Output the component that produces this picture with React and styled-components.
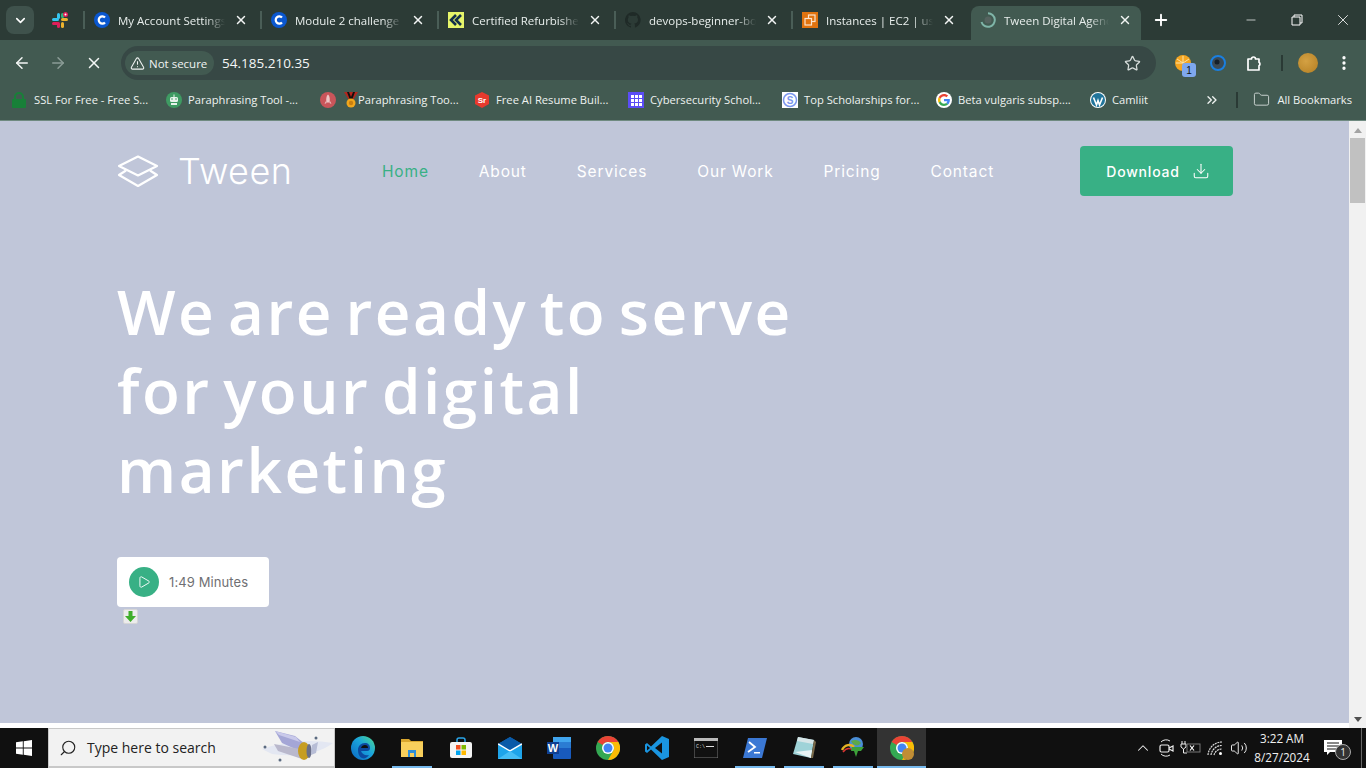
import React from "react";
import styled, { createGlobalStyle } from "styled-components";
import { ArrowLeft, ArrowRight, X, TriangleAlert, Star, MoreVertical, ChevronDown, Plus, Folder, ChevronsRight, ChevronUp, Search, Minus, Volume2, Download as DownloadIcon, Play } from "lucide-react";

const Global = createGlobalStyle`
  html, body { margin: 0; padding: 0; height: 100%; overflow: hidden; }
  body { font-family: "Open Sans", "Noto Sans", sans-serif; }
  * { box-sizing: border-box; }
`;
const Screen = styled.div`width:1366px;height:768px;display:flex;flex-direction:column;overflow:hidden;background:#fff;`;
const TabStrip = styled.div`height:40px;flex:none;background:#2c3b36;display:flex;align-items:flex-end;`;
const TabSearch = styled.div`width:28px;height:28px;margin:0 0 6px 6px;border-radius:8px;background:#3f524c;display:flex;align-items:center;justify-content:center;color:#fff;flex:none;`;
const PinnedTab = styled.div`width:49px;height:34px;flex:none;display:flex;align-items:center;padding:0 0 6px 18px;`;
const Tab = styled.div`
  width:${p=>p.$active?"170px":"177px"};height:34px;flex:none;display:flex;align-items:center;position:relative;
  padding:${p=>p.$active?"0 8px 6px 9px":"0 11px 6px 11px"};gap:8px;
  margin-left:${p=>p.$active?"3px":"0"};
  background:${p=>p.$active?"#425a51":"transparent"};
  border-radius:8px 8px 0 0;
  &::before{content:"";display:${p=>p.$active?"none":"block"};position:absolute;left:0;top:5px;height:18px;width:2px;background:#4a5e57;}
`;
const TabTitle = styled.div`
  flex:1;min-width:0;overflow:hidden;white-space:nowrap;font-size:11.5px;color:#e8eeec;
  -webkit-mask-image:linear-gradient(to right,#000 82%,transparent 100%);mask-image:linear-gradient(to right,#000 82%,transparent 100%);
`;
const TabClose = styled.div`width:16px;height:16px;flex:none;display:flex;align-items:center;justify-content:center;color:#f2f5f4;`;
const NewTab = styled.div`width:24px;height:24px;margin:0 0 8px 8px;color:#fff;display:flex;align-items:center;justify-content:center;flex:none;`;
const WindowBtns = styled.div`margin-left:auto;display:flex;height:40px;align-self:flex-start;`;
const WinBtn = styled.div`width:46px;height:40px;display:flex;align-items:center;justify-content:center;color:#fff;`;

const Toolbar = styled.div`height:40px;flex:none;background:#425a51;display:flex;align-items:flex-end;`;
const NavIcons = styled.div`width:121px;height:34px;flex:none;display:flex;align-items:center;padding-left:12px;gap:16px;`;
const NavIcon = styled.div`width:20px;height:20px;display:flex;align-items:center;justify-content:center;color:${p=>p.$dim?"#8b9c96":"#f3f6f5"};`;
const Omnibox = styled.div`width:1035px;height:34px;flex:none;background:#374845;border-radius:17px;display:flex;align-items:center;padding:0 15px 0 4px;`;
const Chip = styled.div`height:24px;width:89px;flex:none;border-radius:12px;background:#425a51;display:flex;align-items:center;gap:4px;padding-left:5px;color:#f0f3f2;font-size:11.5px;`;
const Url = styled.div`margin-left:8px;font-size:13.5px;color:#f4f7f6;flex:1;`;
const ToolRight = styled.div`flex:1;height:34px;display:flex;align-items:center;padding-left:18px;position:relative;`;
const ExtSlot = styled.div`width:36px;height:24px;display:flex;align-items:center;flex:none;position:relative;`;
const Badge = styled.span`position:absolute;left:8px;top:12px;width:14px;height:14px;border-radius:3px;background:#7fa8ee;color:#111;font:10px "Liberation Sans",sans-serif;display:flex;align-items:center;justify-content:center;`;
const VSep = styled.div`width:2px;height:16px;background:#2a3a35;flex:none;margin:${p=>p.$m||"0"};`;
const Avatar = styled.div`width:20px;height:20px;border-radius:50%;background:radial-gradient(circle at 40% 40%,#d4a143,#b37e22);flex:none;margin-left:15px;`;
const Dots = styled.div`margin-left:17px;display:flex;color:#fff;`;

const Bookmarks = styled.div`height:41px;flex:none;background:#425a51;border-bottom:1px solid #6f8a80;display:flex;align-items:center;padding:0 0 1px 4px;`;
const Bookmark = styled.div`width:${p=>p.$w||"154px"};flex:none;display:flex;align-items:center;padding-left:7px;gap:${p=>p.$gap||"6px"};font-size:11.2px;color:#eef2f0;white-space:nowrap;`;
const BmRight = styled.div`margin-left:auto;display:flex;align-items:center;padding-right:14px;color:#eef2f0;font-size:11.2px;`;
const BmLabel = styled.span`margin-left:7px;`;
const RocketIcons = styled.span`display:flex;gap:8px;align-items:center;`;

const Body = styled.div`flex:1;min-height:0;display:flex;`;
const Col = styled.div`flex:1;min-width:0;display:flex;flex-direction:column;`;
const Site = styled.main`flex:1;background:#c0c6d9;padding:0 116px 0 117px;min-height:0;overflow:hidden;`;
const Strip = styled.div`height:5px;background:#fff;flex:none;`;
const Header = styled.header`height:100px;display:flex;align-items:center;`;
const Logo = styled.div`display:flex;align-items:center;gap:19px;color:#fff;font-family:"Inter",sans-serif;font-size:36px;font-weight:300;letter-spacing:.4px;width:174px;flex:none;svg{flex:none;}`;
const Nav = styled.nav`display:flex;gap:50px;margin-left:91px;`;
const NavLink = styled.a`font-family:"Inter",sans-serif;font-size:15.5px;letter-spacing:.85px;font-weight:400;color:${p=>p.$active?"#38b085":"#fff"};white-space:nowrap;`;
const DownloadBtn = styled.button`margin-left:auto;width:153px;height:50px;border:0;border-radius:4px;background:#38b085;color:#fff;display:flex;align-items:center;justify-content:center;gap:12px;padding:0 0 0 3px;font-family:"Inter",sans-serif;font-size:14px;font-weight:500;letter-spacing:.8px;`;
const Headline = styled.h1`margin:51px 0 0;font-family:"Open Sans",sans-serif;font-weight:600;font-size:62px;line-height:79px;color:#fff;letter-spacing:2.5px;word-spacing:-7px;max-width:720px;`;
const VideoCard = styled.div`margin-top:48px;width:152px;height:50px;border-radius:4px;background:#fff;display:flex;align-items:center;gap:10px;padding-left:12px;font-family:"Inter",sans-serif;font-size:13px;color:#6f6f73;letter-spacing:.1px;`;
const PlayDot = styled.div`width:30px;height:30px;border-radius:50%;background:#38b085;display:flex;align-items:center;justify-content:center;color:#fff;`;
const IdmBadge = styled.div`margin:2px 0 0 6px;width:15px;height:15px;border-radius:2px;background:#ececec;border:1px solid #d6d6d6;display:flex;align-items:center;justify-content:center;`;

const Scrollbar = styled.div`width:17px;flex:none;background:#f1f1f1;display:flex;flex-direction:column;align-items:center;`;
const Arrow = styled.div`width:0;height:0;border-left:4px solid transparent;border-right:4px solid transparent;margin:${p=>p.$down?"auto 0 6px":"7px 0 0"};${p=>p.$down?"border-top:5px solid #505050;":"border-bottom:5px solid #a3a3a3;"}`;
const Thumb = styled.div`width:15px;height:65px;background:#c1c1c1;margin-top:5px;`;

const Taskbar = styled.div`height:40px;flex:none;background:#101010;display:flex;align-items:stretch;color:#fff;`;
const Start = styled.div`width:48px;display:flex;align-items:center;justify-content:center;flex:none;`;
const SearchBox = styled.div`width:287px;flex:none;background:#f2f2f2;border:1px solid #c8c8c8;border-bottom-width:2px;display:flex;align-items:center;padding-left:10px;gap:10px;color:#222;font-size:14px;`;
const SearchGlass = styled(Search)`transform:scaleX(-1);flex:none;`;
const SearchArt = styled.div`margin-left:auto;display:flex;`;
const TaskIcon = styled.div`width:49px;flex:none;display:flex;align-items:center;justify-content:center;position:relative;margin-left:${p=>p.$first?"3px":"0"};background:${p=>p.$active?"#333":"transparent"};
  &::after{content:"";display:${p=>p.$run?"block":"none"};position:absolute;bottom:0;left:${p=>p.$active?"0":"5px"};right:${p=>p.$active?"0":"4px"};height:2px;background:#76b9ed;}`;
const Tray = styled.div`margin-left:auto;display:flex;align-items:center;`;
const TrayIcon = styled.div`width:24px;display:flex;justify-content:center;color:#eee;flex:none;`;
const Clock = styled.div`width:62px;text-align:center;font-size:11.7px;line-height:19px;color:#f0f0f0;flex:none;`;
const Notif = styled.div`width:32px;height:40px;margin-left:4px;margin-right:12px;display:flex;align-items:center;justify-content:center;position:relative;flex:none;`;
const NotifCount = styled.span`position:absolute;left:18px;top:16px;width:16px;height:16px;border-radius:50%;background:#333;border:1px solid #aaa;font-size:10px;display:flex;align-items:center;justify-content:center;color:#eee;`;
const DesktopLine = styled.div`width:1px;background:#666;flex:none;margin-right:4px;`;

const CIcon = () => <svg width="16" height="16" viewBox="0 0 16 16"><circle cx="8" cy="8" r="8" fill="#0a57d0"/><path d="M11 5.600A3.600 3.600 0 1 0 11 10.400" fill="none" stroke="#fff" strokeWidth="2.200"/></svg>;
const Slack = () => <svg width="16" height="16" viewBox="0 0 16 16"><rect x="0" y="6" width="7" height="3" rx="1.500" fill="#36c5f0"/><rect x="5" y="1" width="3" height="6" rx="1.500" fill="#36c5f0"/><rect x="9" y="6" width="7" height="3" rx="1.500" fill="#ecb22e"/><rect x="0" y="10" width="7" height="3" rx="1.500" fill="#e01e5a"/><rect x="5" y="10" width="3" height="6" rx="1.500" fill="#e01e5a"/><rect x="9" y="10" width="3" height="6" rx="1.500" fill="#ecb22e"/><rect x="9" y="1" width="3" height="5" rx="1.500" fill="#2eb67d"/><circle cx="13.500" cy="2.500" r="2.500" fill="#e01e5a"/><circle cx="13.500" cy="2.500" r="1" fill="#fff"/></svg>;
const Kite = () => <svg width="16" height="16" viewBox="0 0 16 16"><rect width="16" height="16" fill="#e6f56a"/><path d="M8 3 3 8l5 5M13 3 8 8l5 5" fill="none" stroke="#14304a" strokeWidth="2.600"/></svg>;
const Github = () => <svg width="16" height="16" viewBox="0 0 16 16"><path fill="#1f2a27" d="M8 0a8 8 0 0 0-2.500 15.600c.4.100.5-.2.5-.4v-1.400c-2.200.5-2.700-1-2.700-1-.4-.9-.9-1.200-.9-1.200-.7-.5 0-.5 0-.5.8.100 1.200.8 1.200.8.7 1.200 1.900.9 2.300.7.100-.5.3-.9.5-1.100-1.800-.2-3.600-.9-3.600-4 0-.9.3-1.600.8-2.100-.1-.2-.4-1 .1-2.100 0 0 .7-.2 2.200.8a7.600 7.600 0 0 1 4 0c1.500-1 2.200-.8 2.200-.8.500 1.100.2 1.900.1 2.100.5.500.8 1.200.8 2.100 0 3.100-1.900 3.700-3.700 3.900.3.300.6.800.6 1.500v2.200c0 .2.100.5.500.4A8 8 0 0 0 8 0z"/></svg>;
const Aws = () => <svg width="16" height="16" viewBox="0 0 16 16"><rect width="16" height="16" fill="#e0730f"/><rect x="6.500" y="3" width="6.500" height="6.500" fill="none" stroke="#fbe3cc" strokeWidth="1.200"/><rect x="3" y="6.500" width="6.500" height="6.500" fill="#e0730f" stroke="#fbe3cc" strokeWidth="1.200"/></svg>;
const Spinner = () => <svg width="16" height="16" viewBox="0 0 16 16"><circle cx="8" cy="8" r="3.500" fill="#55635f"/><path d="M8 1.200A6.800 6.800 0 1 1 1.500 10" fill="none" stroke="#7fb5a8" strokeWidth="2"/></svg>;

const Lock = () => <svg width="16" height="16" viewBox="0 0 16 16"><rect x="1" y="7" width="14" height="9" rx="1" fill="#188038"/><path d="M4 8V5a4 4 0 0 1 8 0v3" fill="none" stroke="#188038" strokeWidth="2"/></svg>;
const Robot = () => <svg width="16" height="16" viewBox="0 0 16 16"><circle cx="8" cy="8" r="8" fill="#3f9b63"/><rect x="4" y="5" width="8" height="5" rx="1.500" fill="#e8f3ec"/><rect x="5" y="11" width="6" height="2" fill="#e8f3ec"/><circle cx="6" cy="7" r=".8" fill="#3f9b63"/><circle cx="10" cy="7" r=".8" fill="#3f9b63"/><rect x="7.500" y="2.500" width="1" height="2.500" fill="#e8f3ec"/></svg>;
const Rocket = () => <svg width="16" height="16" viewBox="0 0 16 16"><circle cx="8" cy="8" r="8" fill="#c9555a"/><path d="M8 2.500c2 1.500 2 6 1.500 8h-3c-.5-2-.5-6.500 1.500-8z" fill="#eec5c5"/><path d="M6 9 4.500 12 6.500 11ZM10 9l1.500 3-2-1Z" fill="#eec5c5"/></svg>;
const Medal = () => <svg width="14" height="16" viewBox="0 0 14 16"><path d="M0 0h14L9 8H5z" fill="#b3261e"/><path d="M3 0h2l2 5 2-5h2L8 8H6z" fill="#111"/><circle cx="7" cy="11" r="4.500" fill="#f0a61c"/><circle cx="7" cy="11" r="2.200" fill="#c97f10"/></svg>;
const Sr = () => <svg width="16" height="16" viewBox="0 0 16 16"><path d="M8 0 15 3.500V12L8 16 1 12V3.500Z" fill="#e8392d"/><text x="8" y="11" textAnchor="middle" fontSize="8" fontWeight="700" fontFamily="Liberation Sans" fill="#fff">Sr</text></svg>;
const Grid = () => <svg width="16" height="16" viewBox="0 0 16 16"><rect width="16" height="16" fill="#5b4df5"/>{[3,7,11].flatMap(x=>[3,7,11].map(y=><rect key={x+"-"+y} x={x} y={y} width="3" height="3" fill="#fff"/>))}</svg>;
const Sch = () => <svg width="16" height="16" viewBox="0 0 16 16"><rect width="16" height="16" fill="#fff"/><circle cx="8" cy="8" r="6.500" fill="none" stroke="#7b97ee" strokeWidth="1.500"/><text x="8" y="11.500" textAnchor="middle" fontSize="10" fontWeight="700" fontFamily="Liberation Sans" fill="#7b97ee">S</text></svg>;
const Google = () => <svg width="16" height="16" viewBox="0 0 48 48"><circle cx="24" cy="24" r="24" fill="#fff"/><path fill="#ea4335" d="M24 13c3 0 5.400 1 7.300 2.800l5-5C33.200 7.900 29 6 24 6 17 6 10.900 10 8 15.900l5.900 4.600C15.300 16.100 19.300 13 24 13z"/><path fill="#4285f4" d="M41.600 24.500c0-1.300-.1-2.300-.3-3.500H24v6.800h10c-.4 2.200-1.700 4.100-3.500 5.400l5.700 4.400c3.300-3.100 5.400-7.600 5.400-12.700z"/><path fill="#fbbc05" d="M13.900 27.500c-.4-1.100-.6-2.300-.6-3.500s.2-2.400.6-3.500L8 15.900C6.700 18.300 6 21.100 6 24s.7 5.700 2 8.100z"/><path fill="#34a853" d="M24 42c4.900 0 9-1.600 12.200-4.400l-5.700-4.400c-1.600 1.100-3.700 1.800-6.500 1.800-4.700 0-8.700-3.100-10.100-7.500L8 32.100C10.900 38 17 42 24 42z"/></svg>;
const Wp = () => <svg width="16" height="16" viewBox="0 0 16 16"><circle cx="8" cy="8" r="8" fill="#fff"/><circle cx="8" cy="8" r="7" fill="#21759b"/><path d="M3.500 5.500 6.500 13 8 8.500 9.500 13 12.500 5.500" fill="none" stroke="#fff" strokeWidth="1.600"/></svg>;
const Orange = () => <svg width="18" height="18" viewBox="0 0 18 18"><circle cx="9" cy="9" r="8" fill="#f4a521"/><path d="M9 9 3 5M9 9 9 2M9 9l6-4M9 9H2" stroke="#fde3a8" strokeWidth="1"/></svg>;
const BlueRing = () => <svg width="16" height="16" viewBox="0 0 16 16"><circle cx="8" cy="8" r="7" fill="#3b4a55" stroke="#1a7fe0" strokeWidth="2"/><circle cx="7" cy="7" r="2.500" fill="#15202b"/></svg>;
const Ext = () => <svg width="18" height="18" viewBox="0 0 18 18"><path d="M2 5h3.500a2 2 0 0 1 4 0H13v3.300a2 2 0 0 1 0 3.400V16H2z" fill="none" stroke="#fff" strokeWidth="1.700" strokeLinejoin="round"/></svg>;

const LogoMark = () => <svg width="42" height="33" viewBox="0 0 42 33"><path d="M21 1.500 40 11 21 20.500 2 11Z" fill="none" stroke="#fff" strokeWidth="2.200" strokeLinejoin="round"/><path d="M9 15.500 2 20l19 11 19-11-7-4.500" fill="none" stroke="#fff" strokeWidth="2.200" strokeLinejoin="round"/></svg>;
const Idm = () => <svg width="11" height="11" viewBox="0 0 11 11"><path d="M3.500 0h4v5H11L5.500 11 0 5h3.500Z" fill="#3fae2a"/></svg>;

const WinLogo = () => <svg width="16" height="16" viewBox="0 0 16 16"><path fill="#fff" d="M0 2.300 6.800 1.300V7.500H0ZM7.700 1.200 16 0V7.500H7.700ZM0 8.400H6.800V14.700L0 13.700ZM7.700 8.400H16V16L7.700 14.800Z"/></svg>;
const Telescope = () => <svg width="72" height="38" viewBox="0 0 72 38"><path d="M0 20Q36 8 71 14Q50 30 10 25Z" fill="#e3e7f2"/><path d="M13 2 33 7 43 15 42 24 20 14Z" fill="#a4a6d6"/><path d="M12 15 38 20 40 30 16 22Z" fill="#b9b8cc"/><path d="M13 2 34 8 38 13 17 6Z" fill="#c9c9ea"/><ellipse cx="42" cy="22" rx="6" ry="9" fill="#c69d22"/><ellipse cx="47" cy="22" rx="2.500" ry="7" fill="#6a6f88"/><path d="M50 16 56 13 54 24 49 26Z" fill="#b7bdd6"/><circle cx="3" cy="18" r="1.500" fill="#5a6a80"/><circle cx="54" cy="9" r="1.500" fill="#5a6a80"/><circle cx="18" cy="31" r="1.500" fill="#5a6a80"/></svg>;
const Edge = () => <svg width="24" height="24" viewBox="0 0 24 24"><defs><linearGradient id="eg" x1="0" y1="1" x2="1" y2="0"><stop offset="0" stopColor="#0a66c2"/><stop offset=".55" stopColor="#1aa3dc"/><stop offset="1" stopColor="#4fdc8f"/></linearGradient></defs><circle cx="12" cy="12" r="12" fill="url(#eg)"/><path d="M7 14c0-4 3-7 7-7 3 0 5 2 5 5 0 2-1 3-3 3H10c1 3 4 5 8 4-2 3-5 4-7 3-3-1-4-5-4-8Z" fill="#0c4aa0"/><path d="M10 12c.5-2 2-3 4-3s3 1 3 3Z" fill="#101010"/></svg>;
const Files = () => <svg width="22" height="22" viewBox="0 0 22 22"><path d="M0 2h8l2 2h12v2H0Z" fill="#d9a62e"/><rect y="5" width="22" height="15" fill="#f8cf5c"/><rect x="7" y="13" width="8" height="7" fill="#2f8fd8"/><rect x="9" y="16" width="4" height="4" fill="#f8cf5c"/></svg>;
const Store = () => <svg width="22" height="22" viewBox="0 0 22 22"><path d="M7 5V3a2 2 0 0 1 2-2h4a2 2 0 0 1 2 2v2" fill="none" stroke="#2aa5e8" strokeWidth="1.500"/><rect y="5" width="22" height="16" rx="2" fill="#f4f4f4"/><rect x="6" y="8" width="4.500" height="4.500" fill="#f25022"/><rect x="11.500" y="8" width="4.500" height="4.500" fill="#7fba00"/><rect x="6" y="13.500" width="4.500" height="4.500" fill="#00a4ef"/><rect x="11.500" y="13.500" width="4.500" height="4.500" fill="#ffb900"/></svg>;
const Mail = () => <svg width="24" height="22" viewBox="0 0 24 22"><path d="M12 0 24 7V22H0V7Z" fill="#0f6cbd"/><rect y="7" width="24" height="15" fill="#1ea4ea"/><path d="M0 7 12 0 24 7 12 14Z" fill="#0a5aa8"/><path d="M0 7 12 14 24 7" fill="none" stroke="#fff" strokeWidth="1.500"/><path d="M0 22 12 14 24 22Z" fill="#45bdf5"/></svg>;
const Word = () => <svg width="24" height="22" viewBox="0 0 24 22"><rect x="6" y="0" width="18" height="22" rx="1" fill="#185abd"/><rect x="6" y="0" width="18" height="5.500" fill="#41a5ee"/><rect x="6" y="5.500" width="18" height="5.500" fill="#2b7cd3"/><rect y="5" width="12" height="12" fill="#103f91"/><text x="6" y="15" textAnchor="middle" fontSize="11" fontWeight="700" fontFamily="Liberation Sans" fill="#fff">W</text></svg>;
const Chrome = ({ dot }) => <svg width="24" height="24" viewBox="0 0 24 24"><circle cx="12" cy="12" r="12" fill="#34a853"/><path d="M12 0a12 12 0 0 1 10.400 6H12a6 6 0 0 0-5.200 3L1.600 6A12 12 0 0 1 12 0Z" fill="#ea4335"/><path d="M22.400 6A12 12 0 0 1 12 24l5.200-9A6 6 0 0 0 12 6Z" fill="#fbbc05"/><circle cx="12" cy="12" r="6" fill="#fff"/><circle cx="12" cy="12" r="4.500" fill="#4285f4"/>{dot && <circle cx="18" cy="18" r="6" fill="#c08d35"/>}</svg>;
const VsCode = () => <svg width="24" height="24" viewBox="0 0 24 24"><path d="M17 0 24 3V21L17 24 6 13.500 2 17 0 15.500V8.500L2 7l4 3.500Z" fill="#1a95e0"/><path d="M17 6.500 10 12l7 5.500Z" fill="#101010"/><path d="M2 9.500V14.500L5 12Z" fill="#101010"/></svg>;
const Cmd = () => <svg width="24" height="20" viewBox="0 0 24 20"><rect width="24" height="20" fill="#111" stroke="#777"/><rect width="24" height="3" fill="#bbb"/><text x="2" y="10" fontSize="5" fontFamily="Liberation Mono" fill="#ddd">C:\</text><rect x="12" y="8" width="8" height="1" fill="#ddd"/></svg>;
const Ps = () => <svg width="24" height="20" viewBox="0 0 24 20"><path d="M5 0H24L19 20H0Z" fill="#3b78d4"/><path d="M6 4 12 9 5 14" fill="none" stroke="#fff" strokeWidth="1.800"/><rect x="11" y="14" width="6" height="1.500" fill="#fff"/></svg>;
const Notepad = () => <svg width="24" height="24" viewBox="0 0 24 24"><path d="M6 1 22 4 19 22 1 18Z" fill="#9fd3d8"/><path d="M6 1 22 4 21 8 5 5Z" fill="#d7e6e8"/><path d="M3 16 19 22 20 14Z" fill="#e8f3f4"/><path d="M22 4 24 6 21 22 19 22Z" fill="#7a6a4a"/></svg>;
const IdmApp = () => <svg width="24" height="24" viewBox="0 0 24 24"><circle cx="15" cy="8" r="7" fill="#4a8ed6"/><path d="M10 5c4-2 8-1 10 2-2 3-5 3-8 1Z" fill="#5da84a"/><path d="M1 14c3-6 9-6 12-3" fill="none" stroke="#e5b323" strokeWidth="2.500"/><path d="M2 16c3-4 7-4 10-2" fill="none" stroke="#d33" strokeWidth="1.500"/><path d="M11 11h12l-3 4h-3l-2 6-2-6h-3Z" fill="#3da13a"/></svg>;
const Cam = () => <svg width="16" height="18" viewBox="0 0 16 18"><path d="M2 3A7 7 0 0 1 11 2M2 15A7 7 0 0 0 11 16" fill="none" stroke="#eee"/><rect x="1" y="6" width="9" height="7" rx="1.500" fill="none" stroke="#eee" strokeWidth="1.200"/><path d="M10 9 14 7V12L10 10" fill="none" stroke="#eee" strokeWidth="1.200"/></svg>;
const Batt = () => <svg width="22" height="16" viewBox="0 0 22 16"><path d="M2 1V4M5 1V4M1 4H6V7L3.500 9 1 7ZM3.500 9V13H7" fill="none" stroke="#eee"/><rect x="7" y="4" width="13" height="8" fill="none" stroke="#777"/><path d="M10 5.500 14 10.500M14 5.500 10 10.500" stroke="#fff" strokeWidth="1.200"/></svg>;
const WifiTray = () => <svg width="17" height="16" viewBox="0 0 17 16"><path d="M1 15A14 14 0 0 1 15 2M4 15A11 11 0 0 1 15 5.500M7 15A8 8 0 0 1 15 9" fill="none" stroke="#ddd" strokeWidth="1.200" strokeDasharray="2 .7"/><circle cx="13.500" cy="13.500" r="1.500" fill="#fff"/></svg>;
const NoteIcon = () => <svg width="18" height="16" viewBox="0 0 18 16"><path d="M0 0H18V12H6L3 15V12H0Z" fill="#fff"/><path d="M3 3H15M3 6H15M3 9H15" stroke="#101010"/></svg>;

const tabs = [
  { icon: <CIcon/>, title: "My Account Settings" },
  { icon: <CIcon/>, title: "Module 2 challenge" },
  { icon: <Kite/>, title: "Certified Refurbished" },
  { icon: <Github/>, title: "devops-beginner-bootcamp" },
  { icon: <Aws/>, title: "Instances | EC2 | us-west" },
];
const bookmarks = [
  { icon: <Lock/>, t: "SSL For Free - Free S...", w: "155px", gap: "7px" },
  { icon: <Robot/>, t: "Paraphrasing Tool -..." },
  { icon: <RocketIcons><Rocket/><Medal/></RocketIcons>, t: "Paraphrasing Too...", gap: "0" },
  { icon: <Sr/>, t: "Free AI Resume Buil..." },
  { icon: <Grid/>, t: "Cybersecurity Schol..." },
  { icon: <Sch/>, t: "Top Scholarships for..." },
  { icon: <Google/>, t: "Beta vulgaris subsp...." },
  { icon: <Wp/>, t: "Camliit", w: "100px" },
];
const links = ["Home","About","Services","Our Work","Pricing","Contact"];

export default function App() {
  return (
    <Screen>
      <Global/>
      <TabStrip>
        <TabSearch><ChevronDown size={15} strokeWidth={2.5}/></TabSearch>
        <PinnedTab><Slack/></PinnedTab>
        {tabs.map(t => (
          <Tab key={t.title}>
            {t.icon}
            <TabTitle>{t.title}</TabTitle>
            <TabClose><X size={14} strokeWidth={2.5}/></TabClose>
          </Tab>
        ))}
        <Tab $active>
          <Spinner/>
          <TabTitle>Tween Digital Agency</TabTitle>
          <TabClose><X size={14} strokeWidth={2.5}/></TabClose>
        </Tab>
        <NewTab><Plus size={18} strokeWidth={2.5}/></NewTab>
        <WindowBtns>
          <WinBtn><Minus size={14} strokeWidth={1.2}/></WinBtn>
          <WinBtn><svg width="12" height="12" viewBox="0 0 12 12"><path d="M3 3V1H11V9H9M1 3H9V11H1Z" fill="none" stroke="#fff"/></svg></WinBtn>
          <WinBtn><X size={18} strokeWidth={1.1}/></WinBtn>
        </WindowBtns>
      </TabStrip>
      <Toolbar>
        <NavIcons>
          <NavIcon><ArrowLeft size={18} strokeWidth={2}/></NavIcon>
          <NavIcon $dim><ArrowRight size={18} strokeWidth={2}/></NavIcon>
          <NavIcon><X size={18} strokeWidth={2}/></NavIcon>
        </NavIcons>
        <Omnibox>
          <Chip><TriangleAlert size={15} strokeWidth={1.7}/>Not secure</Chip>
          <Url>54.185.210.35</Url>
          <Star size={17} color="#d6dcda" strokeWidth={1.8}/>
        </Omnibox>
        <ToolRight>
          <ExtSlot><Orange/><Badge>1</Badge></ExtSlot>
          <ExtSlot><BlueRing/></ExtSlot>
          <ExtSlot><Ext/></ExtSlot>
          <VSep $m="0 0 0 -1px"/>
          <Avatar/>
          <Dots><MoreVertical size={18} strokeWidth={2.4}/></Dots>
        </ToolRight>
      </Toolbar>
      <Bookmarks>
        {bookmarks.map(b => (
          <Bookmark key={b.t} $w={b.w} $gap={b.gap}>
            {b.icon}
            <span>{b.t}</span>
          </Bookmark>
        ))}
        <BmRight>
          <ChevronsRight size={16} strokeWidth={2}/>
          <VSep $m="0 15px 0 16px"/>
          <Folder size={17} strokeWidth={1.4} color="#c7d0cd"/>
          <BmLabel>All Bookmarks</BmLabel>
        </BmRight>
      </Bookmarks>
      <Body>
        <Col>
          <Site>
            <Header>
              <Logo><LogoMark/>Tween</Logo>
              <Nav>{links.map((l,i)=><NavLink key={l} $active={i===0}>{l}</NavLink>)}</Nav>
              <DownloadBtn>Download <DownloadIcon size={18} strokeWidth={1.4}/></DownloadBtn>
            </Header>
            <Headline>We are ready to serve for your digital marketing</Headline>
            <VideoCard>
              <PlayDot><Play size={14} strokeWidth={1.6}/></PlayDot>
              1:49 Minutes
            </VideoCard>
            <IdmBadge><Idm/></IdmBadge>
          </Site>
          <Strip/>
        </Col>
        <Scrollbar><Arrow/><Thumb/><Arrow $down/></Scrollbar>
      </Body>
      <Taskbar>
        <Start><WinLogo/></Start>
        <SearchBox>
          <SearchGlass size={18} strokeWidth={1.5}/>
          Type here to search
          <SearchArt><Telescope/></SearchArt>
        </SearchBox>
        <TaskIcon $first><Edge/></TaskIcon>
        <TaskIcon $run><Files/></TaskIcon>
        <TaskIcon><Store/></TaskIcon>
        <TaskIcon><Mail/></TaskIcon>
        <TaskIcon><Word/></TaskIcon>
        <TaskIcon><Chrome/></TaskIcon>
        <TaskIcon><VsCode/></TaskIcon>
        <TaskIcon><Cmd/></TaskIcon>
        <TaskIcon $run><Ps/></TaskIcon>
        <TaskIcon $run><Notepad/></TaskIcon>
        <TaskIcon $run><IdmApp/></TaskIcon>
        <TaskIcon $run $active><Chrome dot/></TaskIcon>
        <Tray>
          <TrayIcon><ChevronUp size={18} strokeWidth={1.4}/></TrayIcon>
          <TrayIcon><Cam/></TrayIcon>
          <TrayIcon><Batt/></TrayIcon>
          <TrayIcon><WifiTray/></TrayIcon>
          <TrayIcon><Volume2 size={18} strokeWidth={1.3}/></TrayIcon>
          <Clock>3:22 AM<br/>8/27/2024</Clock>
          <Notif><NoteIcon/><NotifCount>1</NotifCount></Notif>
        </Tray>
        <DesktopLine/>
      </Taskbar>
    </Screen>
  );
}
